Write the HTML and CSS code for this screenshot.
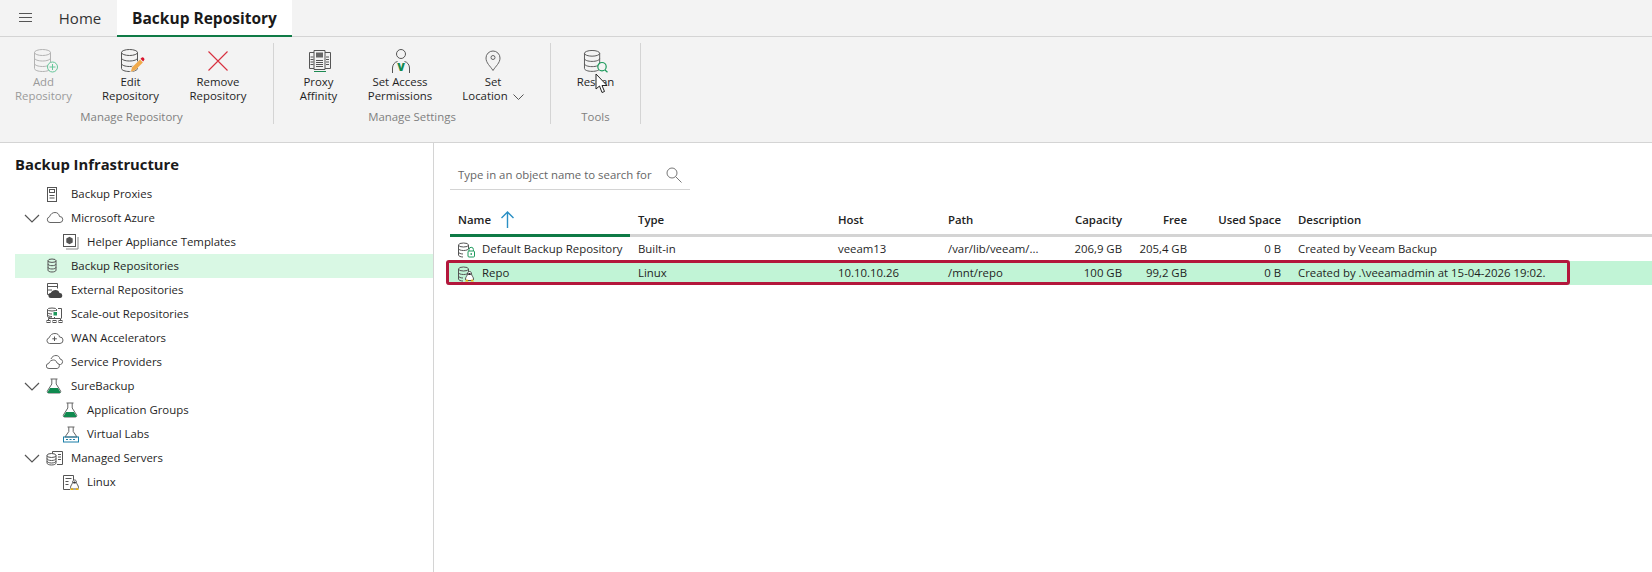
FILE: index.html
```html
<!DOCTYPE html>
<html lang="en">
<head>
<meta charset="utf-8">
<title>Backup Repository</title>
<link rel="stylesheet" href="styles.css">
</head>
<body>
<svg class="defs" width="0" height="0" aria-hidden="true">
  <defs>
    <g id="db">
      <ellipse cx="8.500" cy="3.500" rx="8" ry="3"/>
      <path d="M.5 3.500v16c0 1.700 3.600 3 8 3s8-1.300 8-3v-16M.5 9c0 1.700 3.600 3 8 3s8-1.300 8-3M.5 14.500c0 1.700 3.600 3 8 3s8-1.300 8-3"/>
    </g>
    <g id="smalldb">
      <ellipse cx="5.500" cy="2.500" rx="5" ry="2"/>
      <path d="M.5 2.500v10c0 1.100 2 2 4.500 2M10.500 2.500v4M.5 6c0 1.100 2 2 5 2s5-.9 5-2M.5 9.500c0 1.100 2 2 4.500 2"/>
    </g>
    <g id="tux">
      <path d="M4.500.5C3 .5 2.500 1.500 2.500 3 2.500 4.500.5 6 .5 8c0 .8.500 1.500 1 1.500h6c.5 0 1-.7 1-1.500 0-2-2-3.500-2-5C6.500 1.500 6 .5 4.500.5z" fill="#fff" stroke="#444" stroke-width=".9"/>
      <path d="M3 3.500c0-2 3-2 3 0 0 .6-3 .6-3 0z" fill="#333"/>
      <path d="M0 10.500l2-2.500 1.500 2.500zM9 10.500l-2-2.500-1.500 2.500z" fill="#eab308"/>
    </g>
    <g id="flask">
      <path d="M4.500 2h7M5.800 2v5L1.400 14c-.5 1 .2 2 1.100 2h11c.9 0 1.600-1 1.100-2L10.200 7V2" fill="none" stroke="#666"/>
      <path d="M4 11h8l2.500 4.200c0 .3-.3.800-.8.800H2.300c-.5 0-.8-.5-.8-.8z" fill="#0f8a4f"/>
    </g>
  </defs>
</svg>

<header class="tabbar">
  <button class="menu" aria-label="Menu">
    <svg width="14" height="10" viewBox="0 0 14 10"><path d="M0 .5h13M0 4.500h13M0 8.500h13" stroke="#555" fill="none"/></svg>
  </button>
  <div class="tab home">Home</div>
  <div class="tab active">Backup Repository</div>
</header>

<section class="ribbon">
  <div class="group g1">
    <div class="btns">
      <div class="rbtn w87 disabled">
        <svg class="ricon" width="30" height="24" viewBox="0 0 30 24"><use href="#db" transform="translate(5 0)" fill="none" stroke="#b3b3b3"/><circle cx="23.500" cy="18" r="5" fill="#f3f3f3" stroke="#66c79a"/><path d="M23.500 15v6M20.500 18h6" stroke="#66c79a"/></svg>
        <span>Add<br>Repository</span>
      </div>
      <div class="rbtn w87">
        <svg class="ricon" width="30" height="24" viewBox="0 0 30 24"><use href="#db" transform="translate(5 0)" fill="none" stroke="#555"/><path d="M14 23.500l1.500-5.500 9-8.500 3 3-8 8.500z" fill="#f3f3f3"/><path d="M14.800 22.700l1.400-4.400 7.800-7.800 2.900 2.900-7.800 7.800z" fill="#f0a94a"/><path d="M24.500 9.800l.8-.8a1.700 1.700 0 0 1 2.600 2.600l-.8.800z" fill="#d8142c"/></svg>
        <span>Edit<br>Repository</span>
      </div>
      <div class="rbtn w88">
        <svg class="ricon" width="30" height="24" viewBox="0 0 30 24"><path d="M5.500 2.500l19 19M24.500 2.500l-19 19" stroke="#d8303f" stroke-width="1.100" fill="none"/></svg>
        <span>Remove<br>Repository</span>
      </div>
    </div>
    <div class="glabel">Manage Repository</div>
  </div>

  <div class="group g2">
    <div class="btns">
      <div class="rbtn w70">
        <svg class="ricon" width="30" height="24" viewBox="0 0 30 24"><g fill="none" stroke="#555"><path d="M10 3.500H5.500v16H10M21 3.500h5.500v16H21M10 1.500h11v19H10z"/><path d="M12 11.500h7M12 13.500h7M12 15.500h7M12 17.500h7M6.500 8h3M6.500 10.500h3M6.500 13h3M6.500 15.500h3M22 8h3M22 10.500h3M22 13h3M22 15.500h3"/></g><rect x="12" y="3.500" width="7" height="5" fill="#666"/><path d="M10 22.500h12" stroke="#1d8a52"/></svg>
        <span>Proxy<br>Affinity</span>
      </div>
      <div class="rbtn w92">
        <svg class="ricon" width="30" height="24" viewBox="0 0 30 24"><g fill="none" stroke="#555"><circle cx="16" cy="5" r="4.500"/><path d="M7.500 26v-7c0-3 2-6 5-6.500M24.500 26v-7c0-3-2-6-5-6.500"/></g><text class="vmark" x="16" y="22">V</text></svg>
        <span>Set Access<br>Permissions</span>
      </div>
      <div class="rbtn w91">
        <svg class="ricon" width="30" height="24" viewBox="0 0 30 24"><g fill="none" stroke="#666"><path d="M15 21.500c-2.800-4.500-7-7.500-7-12.500a7 7 0 0 1 14 0c0 5-4.200 8-7 12.500z"/><circle cx="15" cy="8.500" r="2"/></g></svg>
        <span>Set<br>Location <svg class="chev" width="11" height="6" viewBox="0 0 11 6"><path d="M.5.500l5 5 5-5" fill="none" stroke="#555"/></svg></span>
      </div>
    </div>
    <div class="glabel">Manage Settings</div>
  </div>

  <div class="group g3">
    <div class="btns">
      <div class="rbtn w89">
        <svg class="ricon" width="30" height="24" viewBox="0 0 30 24"><use href="#db" transform="translate(3 1) scale(.95 .95)" fill="none" stroke="#555"/><circle cx="21" cy="17.700" r="4.200" fill="#f3f3f3" stroke="#1d9a5c" stroke-width="1.200"/><path d="M24 21l2.500 2.300" stroke="#1d9a5c" stroke-width="1.200"/></svg>
        <span>Rescan</span>
      </div>
    </div>
    <div class="glabel">Tools</div>
  </div>
  <svg class="cursor" width="14" height="21" viewBox="0 0 14 21"><path d="M1 1v15l3.500-3 2.500 6.500 2.500-1-2.500-6h5z" fill="#fff" stroke="#222"/></svg>
</section>

<main class="workspace">
  <aside class="sidebar">
    <h2>Backup Infrastructure</h2>
    <ul class="tree">
      <li><svg class="ticon" viewBox="0 0 18 18"><g fill="none" stroke="#555"><rect x="1.500" y="2.500" width="9" height="14"/><rect x="3.500" y="4.500" width="5" height="3"/><path d="M3.500 10.500h5M3.500 13h5"/></g></svg>Backup Proxies</li>
      <li><svg class="twisty" viewBox="0 0 16 9"><path d="M1 1l7 7 7-7" fill="none" stroke="#555" stroke-width="1.200"/></svg><svg class="ticon" viewBox="0 0 18 18"><path d="M4 13.500a2.900 2.900 0 0 1 -.5-5.700C4.500 5 6.500 3.500 9 3.500c2.500 0 4 1.500 4.500 4a3 3 0 0 1 .5 6z" fill="none" stroke="#666"/></svg>Microsoft Azure</li>
      <li class="child"><svg class="ticon" viewBox="0 0 18 18"><g fill="none" stroke="#555"><rect x="1.500" y="1.500" width="12" height="12"/><path d="M16 4v12H4" stroke="#888"/></g><path d="M7.500 3.800l3.200 1.800v3.800l-3.200 1.800-3.200-1.800V5.600z" fill="#555"/></svg>Helper Appliance Templates</li>
      <li class="selected"><svg class="ticon" viewBox="0 0 18 18"><g fill="none" stroke="#555" transform="translate(1.500 1.500)"><ellipse cx="4.500" cy="2.200" rx="4" ry="1.700"/><path d="M.5 2.200v9.600c0 .9 1.800 1.700 4 1.700s4-.8 4-1.700V2.200M.5 5.500c0 .9 1.800 1.700 4 1.700s4-.8 4-1.700M.5 8.800c0 .9 1.800 1.700 4 1.700s4-.8 4-1.700"/></g></svg>Backup Repositories</li>
      <li><svg class="ticon" viewBox="0 0 18 18"><g fill="none" stroke="#555"><path d="M11.500 7.500V2.500H1.500v11H4M1.500 5.500h10M1.500 9H6"/></g><path d="M5 17a2.500 2.500 0 0 1 -.3-5C5.700 10 7.500 9 9.500 9c2.200 0 3.600 1.200 4 3a2.500 2.500 0 0 1 .5 5z" fill="#444"/></svg>External Repositories</li>
      <li><svg class="ticon" viewBox="0 0 18 18"><g fill="none" stroke="#555"><ellipse cx="6" cy="4.500" rx="4.500" ry="1.500"/><path d="M1.500 4.500v7c0 .9 2 1.500 4.500 1.500M1.500 7.500c0 .8 2 1.500 4.500 1.500M1.500 10c0 .8 2 1.500 4.500 1.500M10.500 4.500V6M12 3.500h3.500v10"/><path d="M8.500 12v1.500M2.500 15.500v-2h12v2"/><rect x="1" y="15.500" width="3" height="2"/><rect x="7" y="15.500" width="3" height="2"/><rect x="13" y="15.500" width="3" height="2"/></g><rect x="7.500" y="7" width="3.500" height="3.500" fill="#1d9a5c"/></svg>Scale-out Repositories</li>
      <li><svg class="ticon" viewBox="0 0 18 18"><path d="M3.500 14.500a2.900 2.900 0 0 1 -.3-5.700C4.300 5.500 6.500 4.500 9 4.500c2.500 0 4 1.200 4.500 3.500a3.200 3.200 0 0 1 .5 6.500z" fill="none" stroke="#666"/><path d="M8.500 7.500v4.500M6.300 9.800h4.500" stroke="#555"/></svg>WAN Accelerators</li>
      <li><svg class="ticon" viewBox="0 0 18 18"><g fill="none" stroke="#666"><path d="M3 15.500a2.500 2.500 0 0 1 -.3-5C3.700 8 5.500 7 7.500 7c2 0 3 1.200 3.500 3a2.800 2.800 0 0 1 .2 5.500z"/><path d="M5 6c1-2.500 3-3.500 5-3.500 2.500 0 3.500 1.500 4 3.500a2.800 2.800 0 0 1 .5 5.500H13"/></g></svg>Service Providers</li>
      <li><svg class="twisty" viewBox="0 0 16 9"><path d="M1 1l7 7 7-7" fill="none" stroke="#555" stroke-width="1.200"/></svg><svg class="ticon" viewBox="0 0 18 18"><use href="#flask"/></svg>SureBackup</li>
      <li class="child"><svg class="ticon" viewBox="0 0 18 18"><use href="#flask"/></svg>Application Groups</li>
      <li class="child"><svg class="ticon" viewBox="0 0 18 18"><path d="M5.500 2h7M6.800 2v4.500L3 12h12l-3.800-5.500V2" fill="none" stroke="#666"/><rect x="1.500" y="12" width="15" height="5" fill="none" stroke="#1b7fa8"/><path d="M4 14.500h10" stroke="#1b7fa8" stroke-dasharray="2 1.500"/></svg>Virtual Labs</li>
      <li><svg class="twisty" viewBox="0 0 16 9"><path d="M1 1l7 7 7-7" fill="none" stroke="#555" stroke-width="1.200"/></svg><svg class="ticon" viewBox="0 0 18 18"><g fill="none" stroke="#555"><path d="M6.500 4.500v-2h10v13H11"/><path d="M12 5.500h3M12 8h3M12 10.500h3"/><ellipse cx="5.500" cy="6.500" rx="4.500" ry="2"/><path d="M1 6.500v7.500c0 1.100 2 2 4.500 2s4.500-.9 4.500-2V6.500M1 9.500c0 1.100 2 2 4.500 2s4.500-.9 4.500-2M1 12c0 1.100 2 2 4.500 2s4.500-.9 4.500-2"/></g></svg>Managed Servers</li>
      <li class="child"><svg class="ticon" viewBox="0 0 18 18"><g fill="none" stroke="#555"><path d="M8 16.500H1.500v-14h10V7.500M3.500 5.500h6M3.500 8.500h3M3.500 11.500h3"/></g><use href="#tux" transform="translate(8 6.500)"/></svg>Linux</li>
    </ul>
  </aside>

  <section class="content">
    <div class="search">
      <span>Type in an object name to search for</span>
      <svg width="16" height="16" viewBox="0 0 16 16"><circle cx="6" cy="6" r="5" fill="none" stroke="#777"/><path d="M9.500 9.500l6 6" stroke="#777"/></svg>
    </div>
    <div class="table">
      <div class="thead">
        <div class="name sorted">Name<svg class="sort" width="13" height="17" viewBox="0 0 13 17"><path d="M.5 7l6-6 6 6M6.500 1v16" fill="none" stroke="#2a8fc4" stroke-width="1.400"/></svg></div>
        <div>Type</div><div>Host</div><div>Path</div>
        <div class="num">Capacity</div><div class="num">Free</div><div class="num">Used Space</div><div class="desc">Description</div>
      </div>
      <div class="row">
        <div class="name"><svg class="ricn" viewBox="0 0 18 18"><use href="#smalldb" transform="translate(0 2.500)" fill="none" stroke="#555"/><path d="M11 11V9.500a2.200 2.200 0 0 1 4.400 0V11" fill="none" stroke="#1d9a5c"/><rect x="10" y="11" width="6.500" height="6" rx="1" fill="#fff" stroke="#1d9a5c"/><rect x="12.600" y="13" width="1.200" height="2" fill="#1d9a5c"/></svg>Default Backup Repository</div>
        <div>Built-in</div><div>veeam13</div><div>/var/lib/veeam/...</div>
        <div class="num">206,9 GB</div><div class="num">205,4 GB</div><div class="num">0 B</div><div class="desc">Created by Veeam Backup</div>
      </div>
      <div class="row current">
        <div class="name"><svg class="ricn" viewBox="0 0 18 18"><use href="#smalldb" transform="translate(0 2.500)" fill="none" stroke="#555"/><use href="#tux" transform="translate(7 7)"/></svg>Repo</div>
        <div>Linux</div><div>10.10.10.26</div><div>/mnt/repo</div>
        <div class="num">100 GB</div><div class="num">99,2 GB</div><div class="num">0 B</div><div class="desc">Created by .\veeamadmin at 15-04-2026 19:02.</div>
        <div class="callout"></div>
      </div>
    </div>
  </section>
</main>
</body>
</html>
```
FILE: styles.css
```css
* { box-sizing: border-box; }
html, body { margin: 0; height: 100%; }
body {
  width: 1652px;
  height: 572px;
  overflow: hidden;
  background: #fff;
  color: #1f1f1f;
  font: 11.4px/14px "Open Sans", "Noto Sans", sans-serif;
  display: flex;
  flex-direction: column;
}
.defs { position: absolute; }

.tabbar {
  height: 37px;
  flex: none;
  display: flex;
  align-items: stretch;
  background: #f3f3f3;
  border-bottom: 1px solid #d4d4d4;
}
.menu {
  width: 47px;
  padding: 0 0 0 19px;
  border: 0;
  background: none;
  display: flex;
  align-items: center;
}
.tab {
  display: flex;
  align-items: center;
  justify-content: center;
  font-size: 15px;
  color: #333;
  width: 70px;
}
.tab.home { padding-right: 4px; }
.tab.active {
  width: 175px;
  margin-bottom: -1px;
  background: #fff;
  color: #1a1a1a;
  font-size: 15.500px;
  font-weight: 700;
  border-bottom: 2px solid #0f7a46;
}

.ribbon {
  position: relative;
  height: 106px;
  flex: none;
  display: flex;
  background: #f3f3f3;
  border-bottom: 1px solid #d4d4d4;
  padding-top: 6px;
}
.group {
  height: 81px;
  display: flex;
  flex-direction: column;
  border-right: 1px solid #d4d4d4;
}
.g1 { width: 274px; padding-right: 10px; }
.g2 { width: 277px; }
.g3 { width: 90px; }
.btns { display: flex; height: 66px; }
.rbtn {
  display: flex;
  flex-direction: column;
  align-items: center;
  text-align: center;
  padding-top: 6px;
}
.rbtn span { display: block; margin-top: 2px; }
.ricon { display: block; flex: none; }
.vmark {
  font-family: "Open Sans", sans-serif;
  font-size: 11px;
  font-weight: 800;
  fill: #12894f;
  text-anchor: middle;
}
.w87 { width: 87px; }
.w88 { width: 88px; }
.w70 { width: 71px; margin-left: 9px; }
.w92 { width: 92px; }
.w91 { width: 91px; padding-left: 3px; }
.w89 { width: 89px; }
.disabled { color: #9a9a9a; }
.chev { margin-left: 2px; }
.glabel {
  text-align: center;
  color: #808080;
  margin-top: 3px;
}
.cursor { position: absolute; left: 595px; top: 36px; }

.workspace { flex: 1; display: flex; min-height: 0; }
.sidebar {
  width: 434px;
  flex: none;
  border-right: 1px solid #d4d4d4;
  padding: 11px 0 0 15px;
}
.sidebar h2 {
  margin: 0 0 8px;
  font-size: 14.800px;
  line-height: 20px;
  font-weight: 700;
  color: #1a1a1a;
}
.tree { list-style: none; margin: 0; padding: 0; }
.tree li {
  height: 24px;
  display: flex;
  align-items: center;
  padding-left: 31px;
  position: relative;
}
.tree li.child { padding-left: 47px; }
.tree li.selected { background: #d9f8e4; }
.ticon { width: 18px; height: 18px; flex: none; margin-right: 7px; }
.twisty { position: absolute; left: 9px; top: 8px; width: 16px; height: 9px; }

.content { flex: 1; min-width: 0; padding: 0 0 0 13px; }
.search {
  width: 240px;
  height: 47px;
  margin: 0 0 0 3px;
  padding: 17px 8px 0 8px;
  display: flex;
  justify-content: space-between;
  align-items: center;
  border-bottom: 1px solid #d4d4d4;
  color: #666;
}
.thead, .row {
  display: grid;
  grid-template-columns: 180px 200px 110px 110px 80px 65px 94px 1fr;
  padding-left: 3px;
}
.thead {
  margin-top: 17px;
  height: 30px;
  font-weight: 600;
  color: #222;
}
.thead > div {
  height: 30px;
  display: flex;
  align-items: center;
  padding: 0 0 2px 8px;
  border-bottom: 3px solid #d4d4d4;
}
.thead > .sorted { border-bottom-color: #0f7a46; }
.thead > .num { justify-content: flex-end; padding: 0 8px 2px 0; }
.sort { margin-left: 10px; }
.row { height: 24px; align-items: center; position: relative; }
.row > div { padding-left: 8px; white-space: nowrap; }
.row > .num { text-align: right; padding: 0 8px 0 0; }
.row > .name { display: flex; align-items: center; }
.thead > .desc, .row > .desc { padding-left: 9px; }
.ricn { width: 18px; height: 18px; margin-right: 6px; flex: none; }
.current { background: #c1f4d6; }
.row > .callout {
  position: absolute;
  left: -1px;
  top: -1px;
  width: 1124px;
  height: 25px;
  padding: 0;
  border: 3px solid #b3173c;
  border-radius: 3px;
}
```
